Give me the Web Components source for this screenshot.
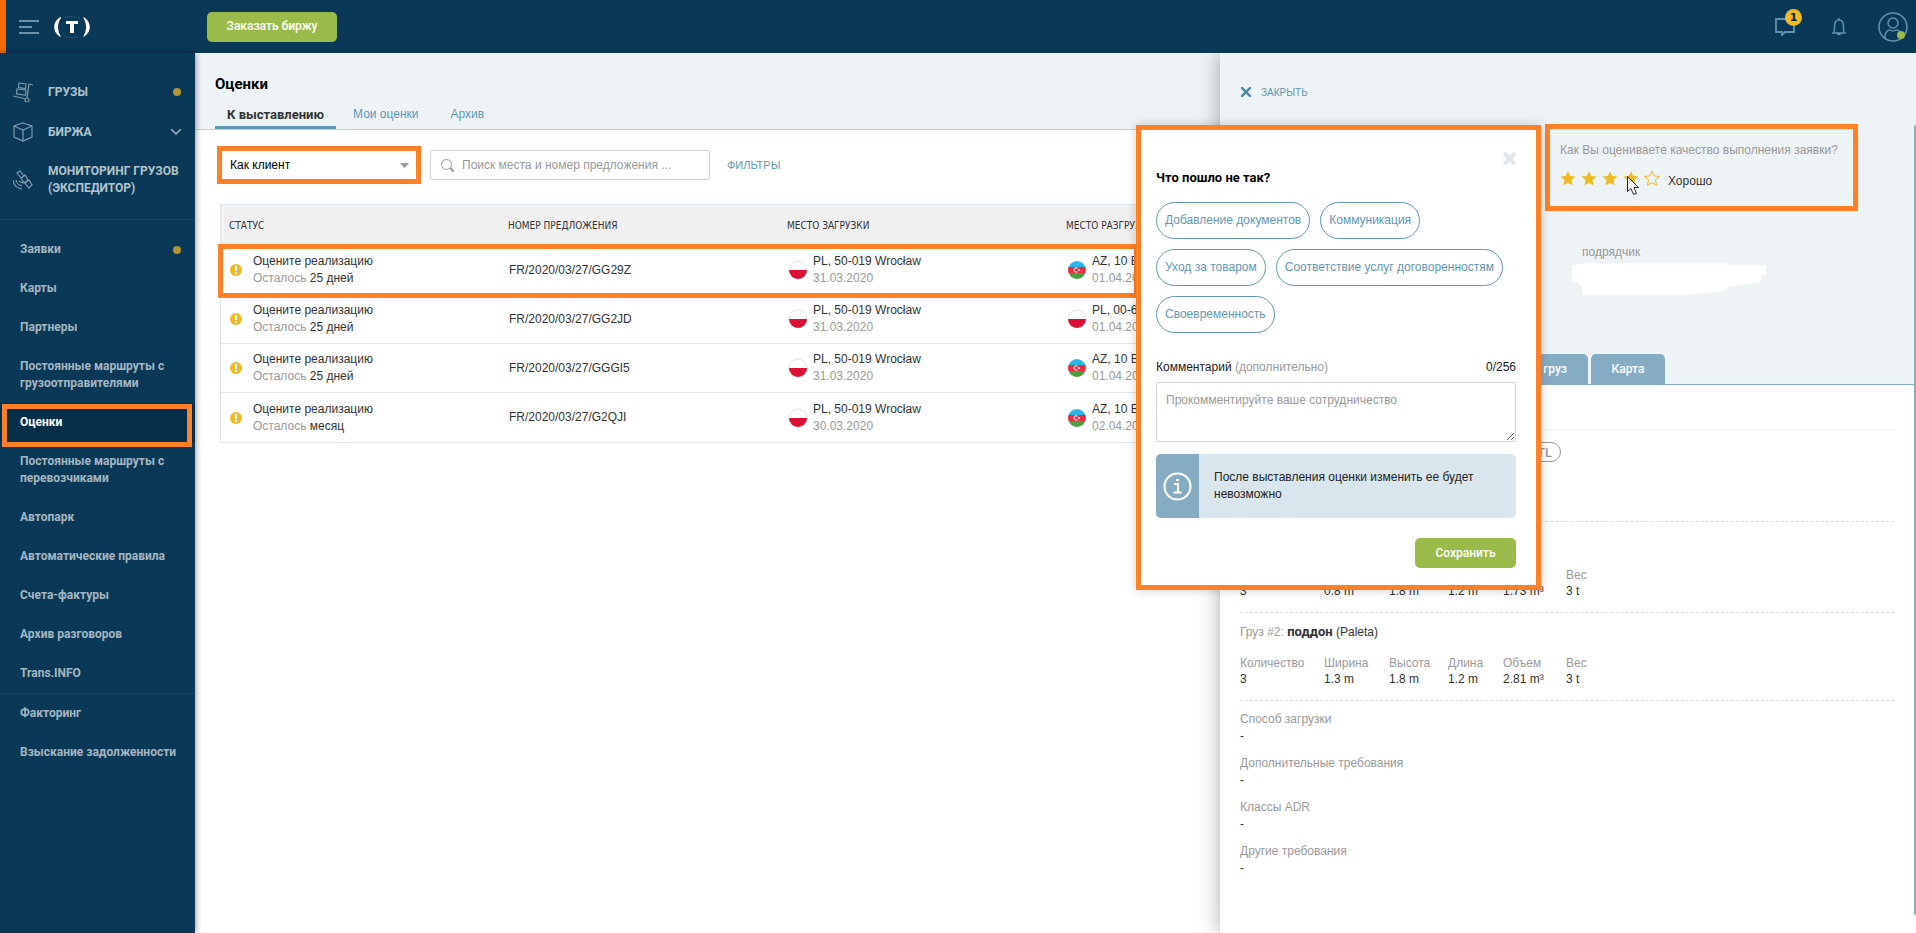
<!DOCTYPE html>
<html lang="ru">
<head>
<meta charset="utf-8">
<title>Оценки</title>
<style>
:root{--navy:#093957;--orange:#ff8127;--blue:#5f97b5;--steel:#86acc4;--pale:#eef3f6;--green:#9abb49;--gold:#efba22;--ink:#333;--muted:#999;
--body:"Liberation Sans",Arial,sans-serif;--strong:Roboto,"Liberation Sans",sans-serif}
body{margin:0;background:#fff}
</style>
</head>
<body>
<rating-app></rating-app>
<script>
const BASE = `*{box-sizing:border-box}a{color:inherit;text-decoration:none}button,input,select,textarea{font:inherit;margin:0}svg{display:block}
button{cursor:pointer;padding:0;border:0;background:none}`;
const define = (name, css, html) => customElements.define(name, class extends HTMLElement {
  constructor() {
    super();
    const read = key => this.getAttribute(key) || '';
    this.attachShadow({ mode: 'open' }).innerHTML =
      `<style>${BASE}${css}</style>${typeof html === 'function' ? html(read) : html}`;
  }
});
const STAR = 'M8 1l2.2 4.9 5.3.6-4 3.6 1.1 5.3L8 12.700l-4.600 2.700 1.100-5.300-4-3.600 5.300-.6z';

define('flag-icon', `:host{display:block;width:20px;height:20px;flex:none}`, get => get('code') === 'az'
  ? `<svg width="20" height="20" viewBox="0 0 20 20" role="img" aria-label="AZ"><clipPath id="c"><circle cx="10" cy="10" r="9"/></clipPath><g clip-path="url(#c)"><path fill="#2cb5e5" d="M0 0h20v7H0z"/><path fill="#ec2c40" d="M0 7h20v6H0z"/><path fill="#4c9d3e" d="M0 13h20v7H0z"/></g><path d="M10.500 8.200a2.200 2.200 0 1 0 0 3.600" fill="none" stroke="#fff"/><circle cx="12" cy="10" r="1" fill="#fff"/></svg>`
  : `<svg width="20" height="20" viewBox="0 0 20 20" role="img" aria-label="PL"><circle cx="10" cy="10" r="9" fill="#fff" stroke="#e2e2e2"/><path d="M1 10h18a9 9 0 0 1-18 0z" fill="#dc1035"/></svg>`);

define('place-cell', `:host{display:flex;align-items:center;gap:5px}small{display:block;font-size:12px;color:var(--muted)}div{white-space:nowrap}`,
  get => `<flag-icon code="${get('code')}"></flag-icon><div><slot></slot><small>${get('date')}</small></div>`);

define('app-header', `:host{display:flex;align-items:center;height:53px;background:var(--navy);border-left:6px solid #f56a0a;font:500 12px/17px var(--strong)}
.brand{display:flex;align-items:center;gap:14px;width:201px;padding-left:13px}
.order{width:130px;height:30px;border-radius:5px;background:var(--green);color:#fff}
.tools{display:flex;align-items:center;gap:31px;margin-left:auto;padding-right:8px}
.chat{position:relative}.badge{position:absolute;left:10px;top:-9px;width:17px;height:17px;border-radius:50%;background:var(--gold);color:#123;font:700 11px/17px "DejaVu Sans",sans-serif;text-align:center}
.chat{width:25px}.bell{width:16px}.user{width:30px}`,
`<div class="brand"><button aria-label="Меню"><svg width="20" height="16" stroke="#8fadbe" stroke-width="1.500"><path d="M0 2h20M0 8h13M0 14h20"/></svg></button>
<a href="#" aria-label="Trans"><svg width="38" height="22" viewBox="0 0 38 22"><path d="M8 1C-1 5-1 17 8 21 4 14 4 8 8 2zM30 1c9 4 9 16 0 20 4-7 4-13 0-20z" fill="#fff"/><path d="M12 1q7-1.500 15 1M12 21q6 1 13 0" fill="none" stroke="#24506d"/><path d="M13 5h12v3h-4v9h-4V8h-4z" fill="#fff"/></svg></a></div>
<button class="order">Заказать биржу</button>
<div class="tools"><button class="chat" aria-label="Сообщения"><svg width="21" height="18" fill="none" stroke="#5f93b0" stroke-width="1.800"><path d="M1 1h18v13h-9l-3 3v-3H1z"/></svg><span class="badge">1</span></button>
<button class="bell" aria-label="Уведомления"><svg width="16" height="18" fill="none" stroke="#5f93b0" stroke-width="1.500"><path d="M1 15h14M3 14c1-3 0-6 1-9 1-4 7-4 8 0 1 3 0 6 1 9M8 2V0M6 15q2 3 4 0"/></svg></button>
<button class="user" aria-label="Профиль"><svg width="30" height="30" fill="none" stroke="#5f93b0" stroke-width="1.500"><circle cx="15" cy="15" r="14"/><circle cx="15" cy="11" r="5"/><path d="M7 27v-3q1-6 5-6 3 2 6 0 5 0 5 6v2"/><circle cx="23" cy="23" r="4" fill="#9abb49" stroke="none"/></svg></button></div>`);

const NAV_ICONS = {
  cargo: '<path d="M6 1l7 1-.5 4.500-7-1zM4 7l9 1-.5 5-9-1zM20 3l-4-1-2 14M0 14l13 3"/><circle cx="14" cy="18" r="2"/>',
  box: '<path d="M10 1l9 3v11l-9 4-9-4V4zM1 4l9 4 9-4M10 8v11"/>',
  sat: '<path d="M4 3l3-2 4 5-3 2zM8 8l4-3 3 5-4 3zM12 13l4-3 3 5-3 3zM0 10q1 8 9 9M3 10q1 5 6 6M6 11l4 2"/>'
};
define('nav-item', `:host{display:block;position:relative;font:700 12px/17px var(--strong);color:#a5b6c1}
a{display:flex;align-items:center;min-height:39px;padding:11px 14px 11px 20px}
:host([icon]) a{min-height:40px;padding:11px 14px 11px 13px;gap:15px;color:#b4c3cc}
svg{flex:none;margin:-2px 0}.text{flex:1}:host([dot]) a::after{content:"";width:8px;height:8px;border-radius:50%;background:#ae9636}
:host([icon=sat]) a{padding-right:8px}
:host([current]) a{background:#052f48;color:#fff}
:host([current])::after{content:"";position:absolute;inset:1px 3px -5px 2px;border:5px solid var(--orange);pointer-events:none}`,
get => `<a href="#">${get('icon') ? `<svg width="20" height="20" fill="none" stroke="#7d99aa" stroke-width="1.200">${NAV_ICONS[get('icon')]}</svg>` : ''}<span class="text"><slot></slot></span>${get('icon') === 'box' ? '<svg width="10" height="6" fill="none" stroke="#9fb3c0" stroke-width="1.500"><path d="M0 0l5 5 5-5"/></svg>' : ''}</a>`);

define('side-nav', `:host{display:block;width:195px;flex:none;background:var(--navy);box-shadow:1px 0 6px #0006;z-index:1}
.main{padding:19px 0 11px}hr{border:0;border-top:1px solid #11486a;margin:0}.list{padding-top:10px}`,
`<nav><div class="main"><nav-item icon="cargo" dot>ГРУЗЫ</nav-item><nav-item icon="box">БИРЖА</nav-item><nav-item icon="sat">МОНИТОРИНГ ГРУЗОВ (ЭКСПЕДИТОР)</nav-item></div><hr>
<div class="list"><nav-item dot>Заявки</nav-item><nav-item>Карты</nav-item><nav-item>Партнеры</nav-item><nav-item>Постоянные маршруты с грузоотправителями</nav-item><nav-item current>Оценки</nav-item><nav-item>Постоянные маршруты с перевозчиками</nav-item><nav-item>Автопарк</nav-item><nav-item>Автоматические правила</nav-item><nav-item>Счета-фактуры</nav-item><nav-item>Архив разговоров</nav-item><nav-item>Trans.INFO</nav-item></div><hr>
<nav-item>Факторинг</nav-item><nav-item>Взыскание задолженности</nav-item></nav>`);

define('page-head', `:host{display:block;background:var(--pale);border-bottom:1px solid #c6cdd2;padding:21px 20px 0}
h1{margin:0;font:700 15px/20px var(--strong);color:#000}nav{display:flex;gap:2px;margin-top:10px}
a{padding:2px 15px 4px;height:25px;font:12px/17px var(--body);color:var(--blue)}
a.on{padding:2px 12px 4px;font:700 13px/17px var(--strong);color:var(--ink);border-bottom:3px solid var(--blue)}`,
`<h1>Оценки</h1><nav><a class="on" href="#">К выставлению</a><a href="#">Мои оценки</a><a href="#">Архив</a></nav>`);

define('filter-bar', `:host{display:flex;align-items:center;gap:9px;margin-left:-3px;font:12px/17px var(--body)}
.as{position:relative;border:5px solid var(--orange)}select{display:block;appearance:none;width:194px;height:28px;padding:0 30px 0 8px;border:0;border-radius:0;background:#fff;color:#000}
.as svg{position:absolute;right:7px;top:12px;pointer-events:none}
.find{display:flex;align-items:center;gap:8px;width:280px;height:30px;border:1px solid #ccd3d8;border-radius:2px;padding:0 10px}
input{flex:1;min-width:0;border:0;padding:0;outline:0;background:none}input::placeholder{color:#999}
button{margin-left:8px;font-size:11px;color:var(--blue)}`,
`<div class="as"><select aria-label="Роль"><option>Как клиент</option></select><svg width="9" height="5"><path d="M0 0h9L4.500 5z" fill="#999"/></svg></div>
<label class="find"><svg width="13" height="13" fill="none" stroke="#999"><circle cx="5.500" cy="5.500" r="5"/><path d="M9 9l4 4" stroke-width="2"/></svg><input aria-label="Поиск" placeholder="Поиск места и номер предложения ..."></label>
<button>ФИЛЬТРЫ</button>`);

const ROWS = [
  ['25 дней', 'GG29Z', '31.03.2020', 'az', 'AZ, 10 B', '01.04.2020'],
  ['25 дней', 'GG2JD', '31.03.2020', 'pl', 'PL, 00-6', '01.04.2020'],
  ['25 дней', 'GGGI5', '31.03.2020', 'az', 'AZ, 10 B', '01.04.2020'],
  ['месяц', 'G2QJI', '30.03.2020', 'az', 'AZ, 10 B', '02.04.2020']];
define('offer-table', `:host{display:block;position:relative;font:12px/17px var(--body);color:var(--ink)}
table{width:100%;table-layout:fixed;border-collapse:separate;border-spacing:0;border:1px solid #dde5ea}
th{height:41px;padding:0 8px;background:#f0f0f0;text-align:left;font:10px/17px "DejaVu Sans Condensed","DejaVu Sans",sans-serif}
td{height:49px;padding:0 9px;border-bottom:1px solid #dde5ea}tr:last-child td{border-bottom:0}
.st{display:flex;align-items:center;gap:11px}i{font-style:normal;color:var(--muted)}
.mark{position:absolute;left:-2px;top:40px;width:921px;height:54px;border:5px solid var(--orange);pointer-events:none}`,
`<table><thead><tr><th>СТАТУС</th><th>НОМЕР ПРЕДЛОЖЕНИЯ</th><th>МЕСТО ЗАГРУЗКИ</th><th>МЕСТО РАЗГРУЗКИ</th><th></th><th></th></tr></thead><tbody>
${ROWS.map(r => `<tr><td><div class="st"><svg width="12" height="12"><circle cx="6" cy="6" r="6" fill="#efba22"/><path d="M6 2v5M6 8v2" stroke="#fff" stroke-width="2"/></svg><div>Оцените реализацию<br><i>Осталось</i> ${r[0]}</div></div></td><td>FR/2020/03/27/${r[1]}</td><td><place-cell code="pl" date="${r[2]}">PL, 50-019 Wrocław</place-cell></td><td><place-cell code="${r[3]}" date="${r[5]}">${r[4]}</place-cell></td><td></td><td></td></tr>`).join('')}</tbody></table><div class="mark"></div>`);

define('star-rating', `:host{display:block;width:313px;height:87px;padding:13px 10px;border:5px solid var(--orange);font:12px/17px var(--body);color:var(--muted)}
fieldset{border:0;margin:0;padding:0;min-width:0}legend{padding:0;white-space:nowrap}.row{position:relative;display:flex;align-items:center;gap:5px;margin-top:7px}
label{position:relative;width:16px;height:16px}input{position:absolute;inset:0;opacity:0}
output{margin:7px 0 0 3px;color:var(--ink)}.cur{position:absolute;left:67px;top:10px}`,
`<fieldset><legend>Как Вы оцениваете качество выполнения заявки?</legend><div class="row">
${[1, 2, 3, 4, 5].map(n => `<label><input type="radio" name="r" value="${n}" aria-label="${n}"${n === 4 ? ' checked' : ''}><svg width="16" height="16"><path d="${STAR}" fill="${n < 5 ? '#efba22' : 'none'}" stroke="#efba22" stroke-width="${n < 5 ? 0 : 1}"/></svg></label>`).join('')}
<output>Хорошо</output><svg class="cur" width="12" height="19"><path d="M.5.5v15l3.500-3 2.500 6 3-1-2.500-6h4.500z" fill="#fff" stroke="#222"/></svg></div></fieldset>`);

define('cargo-item', `:host{display:block;padding:10px 0 13px;border-bottom:1px dashed #ddd}p{margin:0 0 14px;color:var(--muted)}p span{color:var(--ink)}b{font:700 13px/17px var(--strong)}
table{border-spacing:0;table-layout:fixed}th,td{padding:0;text-align:left;font-weight:400;line-height:16px;white-space:nowrap}th{color:var(--muted)}`,
get => { const w = [84, 65, 59, 55, 63, 60], n = ['Количество', 'Ширина', 'Высота', 'Длина', 'Объем', 'Вес'];
  return `<p>Груз #${get('no')}: <span><b>поддон</b> (Paleta)</span></p><table><colgroup>${w.map(x => `<col style="width:${x}px">`).join('')}</colgroup><thead><tr>${n.map(x => `<th>${x}</th>`).join('')}</tr></thead><tbody><tr>${get('values').split('|').map(x => `<td>${x}</td>`).join('')}</tr></tbody></table>`; });

define('detail-field', `:host{display:block;margin-bottom:10px}dl,dd{margin:0}dt{color:var(--muted);line-height:18px}dd{line-height:16px}`,
get => `<dl><dt>${get('label')}</dt><dd><slot></slot></dd></dl>`);

define('offer-drawer', `:host{display:block;position:absolute;top:0;right:0;bottom:0;width:696px;max-width:100%;background:#fff;box-shadow:0 0 20px #0005;clip-path:inset(0 0 0 -30px);font:12px/17px var(--body);color:var(--ink);z-index:2}
.bar{position:absolute;right:0;top:72px;bottom:18px;width:2px;border-radius:2px;background:var(--steel)}
header{display:flex;flex-direction:column;height:332px;background:var(--pale);border-bottom:1px solid var(--steel)}
.close{display:flex;align-items:center;gap:10px;margin:29px 0 0 21px;height:20px;color:var(--blue);font-size:10px;align-self:flex-start}
star-rating{margin:22px 0 0 325px}.who{margin:33px 0 0 352px;color:var(--muted)}.who span{padding-left:10px}
.tabs{display:flex;gap:3px;margin:auto 0 0 20px}.tabs a{height:30px;width:74px;line-height:31px;border-radius:5px 5px 0 0;background:var(--steel);color:#fff;text-align:center;font-family:var(--strong);font-weight:500}.tabs a:first-child{width:348px;text-align:right;padding-right:21px}
.body{padding:44px 22px 0 20px}.line{border-top:1px solid #eee;border-bottom:1px dashed #ddd;height:93px;padding-top:12px}
.load{display:flex;width:321px;justify-content:flex-end}.load span{height:20px;padding:0 8px;border:1px solid #999;border-radius:10px;color:#999;font:500 13px/19px var(--strong)}.body cargo-item:first-of-type{padding-top:13px}.fields{padding-top:9px}`,
`<header><button class="close"><svg width="10" height="10" stroke="#4f89ab" stroke-width="2.500"><path d="M0 0l10 10M10 0L0 10"/></svg>ЗАКРЫТЬ</button><star-rating></star-rating>
<div class="who"><span>подрядчик</span><svg width="196" height="34" fill="#fff"><path d="M0 5l5-2 12-1h138l2 2h37v10h-5v7l-16 2-17 3-4 4-36 4-20 4-66 1-16-3-4-2v-9l-10-6z"/></svg></div>
<nav class="tabs"><a href="#">груз</a><a href="#">Карта</a></nav></header>
<div class="body"><div class="line"><div class="load"><span>FTL</span></div></div>
<cargo-item no="1" values="3|0.8 m|1.8 m|1.2 m|1.73 m³|3 t"></cargo-item><cargo-item no="2" values="3|1.3 m|1.8 m|1.2 m|2.81 m³|3 t"></cargo-item>
<div class="fields"><detail-field label="Способ загрузки">-</detail-field><detail-field label="Дополнительные требования">-</detail-field><detail-field label="Классы ADR">-</detail-field><detail-field label="Другие требования">-</detail-field></div></div><div class="bar"></div>`);

define('feedback-dialog', `:host{display:block;position:absolute;top:72px;right:375px;width:405px;border:5px solid var(--orange);background:#fff;box-shadow:0 0 10px #0003;padding:18px 20px 17px 15px;font:12px/17px var(--body);color:#222;z-index:3}
form{display:flex;flex-direction:column}.x{align-self:flex-end;width:13px;height:20px}h2{margin:1px 0 16px;font:700 13px/17px var(--strong);color:#000}
.chips{display:flex;flex-wrap:wrap;gap:10px;margin-bottom:26px}.chips button{height:37px;padding:0 8px;border:1px solid var(--blue);border-radius:19px;color:var(--blue)}
.lab{display:flex;justify-content:space-between;margin-bottom:6px}i{font-style:normal;color:var(--muted)}
textarea{display:block;height:60px;border:1px solid #d3d6d8;border-radius:2px;padding:9px;outline:0}textarea::placeholder{color:#999}
.info{display:flex;margin:12px 0 20px;height:64px;border-radius:5px;overflow:hidden;background:#dae6ee}.info div{display:grid;place-items:center;width:43px;background:var(--steel)}.info p{flex:1;margin:0;padding:15px}
.save{align-self:flex-end;width:101px;height:30px;border-radius:5px;background:var(--green);color:#fff;font:500 12px/17px var(--strong)}`,
`<form><button type="button" class="x" aria-label="Закрыть"><svg width="13" height="13" stroke="#e0e8ed" stroke-width="4"><path d="M1 1l11 11M12 1L1 12"/></svg></button><h2>Что пошло не так?</h2>
<div class="chips">${['Добавление документов', 'Коммуникация', 'Уход за товаром', 'Соответствие услуг договоренностям', 'Своевременность'].map(t => `<button type="button">${t}</button>`).join('')}</div>
<div class="lab"><label for="t">Комментарий <i>(дополнительно)</i></label><span>0/256</span></div><textarea id="t" placeholder="Прокомментируйте ваше сотрудничество"></textarea>
<div class="info"><div><svg width="29" height="29" fill="none" stroke="#fff" stroke-width="2"><circle cx="14.500" cy="14.500" r="13"/><path d="M11 12h4v8M10.500 20.500h8M13 8h3"/></svg></div><p>После выставления оценки изменить ее будет невозможно</p></div>
<button type="button" class="save">Сохранить</button></form>`);

define('rating-app', `:host{display:flex;flex-direction:column;min-height:100vh}.shell{flex:1;display:flex;position:relative}main{flex:1;min-width:0}.content{padding:16px 20px 0 25px}offer-table{margin-top:20px}`,
`<app-header></app-header><div class="shell"><side-nav></side-nav><main><page-head></page-head><div class="content"><filter-bar></filter-bar><offer-table></offer-table></div></main><offer-drawer></offer-drawer><feedback-dialog></feedback-dialog></div>`);
</script>
</body>
</html>
